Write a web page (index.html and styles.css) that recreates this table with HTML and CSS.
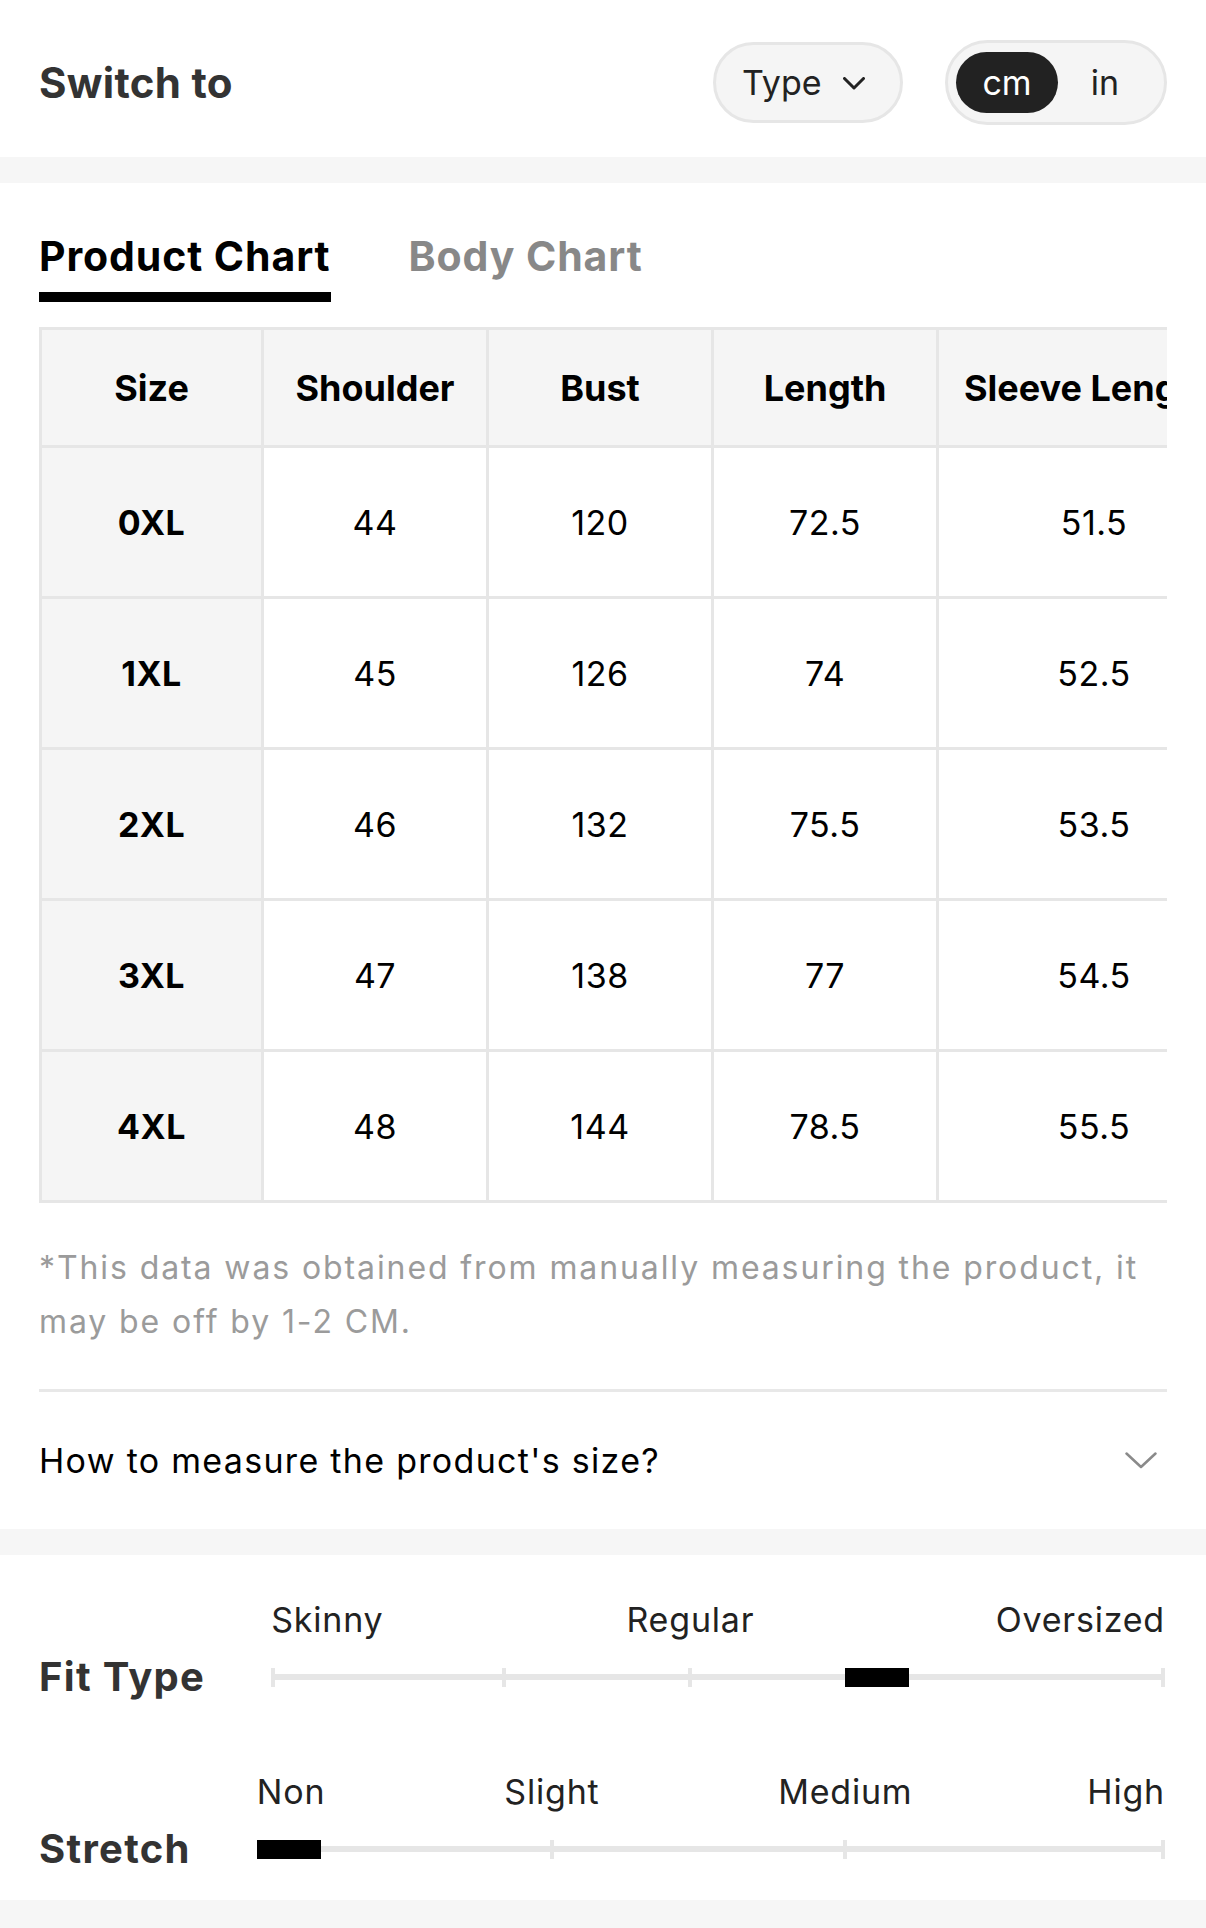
FILE: index.html
```html
<!DOCTYPE html>
<html lang="en">
<head>
<meta charset="utf-8">
<title>Size Guide</title>
<link rel="stylesheet" href="styles.css">
</head>
<body>
<div class="page">
  <header class="switch-bar">
    <h2 class="switch-title">Switch to</h2>
    <div class="switch-controls">
      <button class="type-btn" type="button">
        <span>Type</span>
        <svg class="type-chev" width="22" height="13" viewBox="0 0 22 13" aria-hidden="true"><polyline points="1.5,1.5 11,11 20.5,1.5" fill="none" stroke="#222" stroke-width="3" stroke-linecap="round" stroke-linejoin="round"/></svg>
      </button>
      <div class="unit-toggle">
        <span class="unit unit-active">cm</span>
        <span class="unit">in</span>
      </div>
    </div>
  </header>

  <div class="band"></div>

  <section class="chart">
    <nav class="tabs">
      <span class="tab tab-active">Product Chart</span>
      <span class="tab">Body Chart</span>
    </nav>

    <div class="table-wrap">
      <table class="size-table">
        <colgroup>
          <col class="c-size"><col class="c-mid"><col class="c-mid"><col class="c-mid"><col class="c-wide">
        </colgroup>
        <thead>
          <tr><th>Size</th><th>Shoulder</th><th>Bust</th><th>Length</th><th>Sleeve Length</th></tr>
        </thead>
        <tbody>
          <tr><th>0XL</th><td>44</td><td>120</td><td>72.5</td><td>51.5</td></tr>
          <tr><th>1XL</th><td>45</td><td>126</td><td>74</td><td>52.5</td></tr>
          <tr><th>2XL</th><td>46</td><td>132</td><td>75.5</td><td>53.5</td></tr>
          <tr><th>3XL</th><td>47</td><td>138</td><td>77</td><td>54.5</td></tr>
          <tr><th>4XL</th><td>48</td><td>144</td><td>78.5</td><td>55.5</td></tr>
        </tbody>
      </table>
    </div>

    <p class="note">*This data was obtained from manually measuring the product, it may be off by 1-2 CM.</p>

    <div class="measure">
      <span class="measure-text">How to measure the product's size?</span>
      <svg class="measure-chev" width="32" height="17" viewBox="0 0 32 17" aria-hidden="true"><polyline points="1.5,1.5 16,15 30.5,1.5" fill="none" stroke="#8a8a8a" stroke-width="2.5" stroke-linecap="round" stroke-linejoin="round"/></svg>
    </div>
  </section>

  <div class="band"></div>

  <section class="fit">
    <div class="fit-row">
      <div class="fit-labels">
        <span class="lbl lbl-start">Skinny</span>
        <span class="lbl lbl-mid" style="left:46.9%">Regular</span>
        <span class="lbl lbl-end">Oversized</span>
      </div>
      <div class="fit-name">Fit Type</div>
      <div class="track">
        <span class="tick tick-start"></span>
        <span class="tick" style="left:26%"></span>
        <span class="tick" style="left:46.9%"></span>
        <span class="tick tick-end"></span>
        <span class="knob" style="left:64.2%"></span>
      </div>
    </div>

    <div class="fit-row">
      <div class="fit-labels">
        <span class="lbl lbl-start">Non</span>
        <span class="lbl lbl-mid" style="left:32.5%">Slight</span>
        <span class="lbl lbl-mid" style="left:64.8%">Medium</span>
        <span class="lbl lbl-end">High</span>
      </div>
      <div class="fit-name">Stretch</div>
      <div class="track">
        <span class="tick tick-start"></span>
        <span class="tick" style="left:32.5%"></span>
        <span class="tick" style="left:64.8%"></span>
        <span class="tick tick-end"></span>
        <span class="knob" style="left:0%"></span>
      </div>
    </div>
  </section>

  <div class="band band-end"></div>
</div>
</body>
</html>
```

FILE: styles.css
```css
* { box-sizing: border-box; }

html, body {
  margin: 0;
  padding: 0;
  background: #fff;
}

body {
  font-family: Inter, "Liberation Sans", Arial, sans-serif;
  color: #222;
}

.page {
  width: 1206px;
}

/* ---------- Switch bar ---------- */
.switch-bar {
  height: 157px;
  padding: 8px 39px 0 39px;
  display: flex;
  align-items: center;
  justify-content: space-between;
}

.switch-title {
  margin: 0;
  font-size: 42px;
  font-weight: 700;
  color: #333;
  letter-spacing: 0.3px;
}

.switch-controls {
  display: flex;
  align-items: center;
  gap: 42px;
}

.type-btn {
  width: 190px;
  height: 81px;
  border: 3px solid #e6e6e6;
  border-radius: 41px;
  background: #f5f5f5;
  display: flex;
  align-items: center;
  padding: 0 0 0 26px;
  gap: 21px;
  font-family: inherit;
  font-size: 34px;
  color: #222;
}

.type-chev {
  margin-top: 2px;
}

.unit-toggle {
  width: 222px;
  height: 85px;
  border: 3px solid #e6e6e6;
  border-radius: 43px;
  background: #f5f5f5;
  display: flex;
  align-items: center;
  padding: 0 8px;
}

.unit {
  width: 94px;
  height: 61px;
  display: flex;
  align-items: center;
  justify-content: center;
  font-size: 34px;
  color: #222;
}

.unit-active {
  width: 102px;
  background: #222;
  color: #fff;
  border-radius: 31px;
}

/* ---------- Bands ---------- */
.band {
  height: 26px;
  background: #f6f6f6;
}

.band-end {
  height: 28px;
}

/* ---------- Chart ---------- */
.chart {
  padding: 49px 39px 0 39px;
}

.tabs {
  display: flex;
  align-items: flex-start;
  gap: 78px;
}

.tab {
  display: flex;
  flex-direction: column;
  gap: 12px;
  font-size: 41px;
  line-height: 48px;
  letter-spacing: 0.9px;
  font-weight: 700;
  color: #888;
}

.tab-active {
  color: #000;
}

.tab-active::after {
  content: "";
  display: block;
  height: 10px;
  background: #000;
}

.table-wrap {
  margin-top: 25px;
  width: 1128px;
  overflow: hidden;
}

.size-table {
  border-collapse: separate;
  border-spacing: 0;
  table-layout: fixed;
  width: 1210px;
  border-top: 3px solid #e6e6e6;
  border-left: 3px solid #e6e6e6;
}

.c-size { width: 222px; }
.c-mid { width: 225px; }
.c-wide { width: 313px; }

.size-table th,
.size-table td {
  border-right: 3px solid #e6e6e6;
  border-bottom: 3px solid #e6e6e6;
  text-align: center;
  vertical-align: middle;
  padding: 0;
  color: #000;
}

.size-table thead th {
  height: 118px;
  background: #f5f5f5;
  font-size: 36px;
  font-weight: 700;
  white-space: nowrap;
}

.size-table thead th:last-child {
  text-align: left;
  padding-left: 25px;
}

.size-table tbody th,
.size-table tbody td {
  height: 151px;
  font-size: 34px;
  letter-spacing: 0.5px;
}

.size-table tbody th {
  background: #f5f5f5;
  font-weight: 700;
}

.size-table tbody td {
  font-weight: 400;
  background: #fff;
}

.note {
  margin: 38px 0 0 0;
  font-size: 32px;
  line-height: 54px;
  letter-spacing: 1.9px;
  color: #9b9b9b;
}

.measure {
  margin-top: 40px;
  border-top: 3px solid #e8e8e8;
  height: 140px;
  display: flex;
  align-items: center;
  justify-content: space-between;
  padding-right: 10px;
}

.measure-text {
  font-size: 34px;
  letter-spacing: 1.3px;
  color: #000;
}

/* ---------- Fit ---------- */
.fit {
  padding: 45px 41px 28px 39px;
  display: flex;
  flex-direction: column;
  gap: 72px;
}

.fit-row {
  display: grid;
  grid-template-columns: auto 1fr;
  grid-template-rows: 40px 46px;
  row-gap: 14px;
  column-gap: 66px;
}

.fit-labels {
  grid-column: 2;
  grid-row: 1;
  position: relative;
  height: 40px;
}

.lbl {
  position: absolute;
  top: 0;
  font-size: 34px;
  line-height: 40px;
  letter-spacing: 0.8px;
  color: #222;
  white-space: nowrap;
}

.lbl-start { left: 0; }
.lbl-end { right: 0; }
.lbl-mid { transform: translateX(-50%); }

.fit-name {
  grid-column: 1;
  grid-row: 2;
  align-self: center;
  font-size: 40px;
  line-height: 46px;
  letter-spacing: 1.3px;
  font-weight: 700;
  color: #333;
}

.track {
  grid-column: 2;
  grid-row: 2;
  align-self: center;
  position: relative;
  height: 19px;
}

.track::before {
  content: "";
  position: absolute;
  left: 0;
  right: 0;
  top: 6px;
  height: 6px;
  background: #e6e6e6;
}

.tick {
  position: absolute;
  top: 0;
  width: 4px;
  height: 19px;
  margin-left: -2px;
  background: #e6e6e6;
}

.tick-start { left: 0; margin-left: 0; }
.tick-end { right: 0; margin-left: 0; }

.knob {
  position: absolute;
  top: 0;
  width: 64px;
  height: 19px;
  background: #000;
}
```
